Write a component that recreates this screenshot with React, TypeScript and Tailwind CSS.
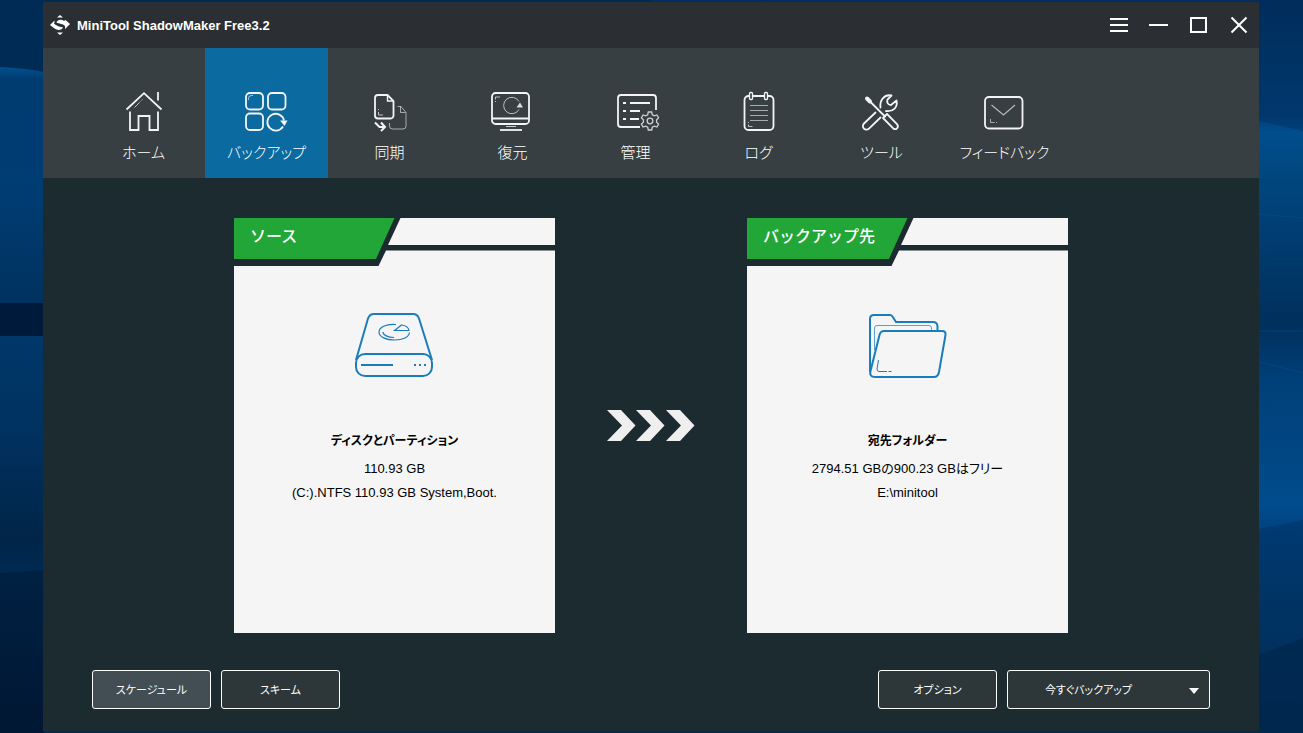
import React, { useState } from 'react';

const iconProps = {
  width: 45,
  height: 44,
  viewBox: '0 0 45 44',
  fill: 'none',
  stroke: '#f2f4f5',
  strokeWidth: 1.8,
  className: 'overflow-visible',
  'aria-hidden': true
};

function HomeIcon() {
  return (
    <svg {...iconProps}>
      <path d="M5.5 19.5 23 3.2 40.5 19.5" />
      <path d="M37 2v8.5" />
      <path d="M9 21.5V40h8.5V26h11v14H37V21.5" />
      <path d="m13.5 17.5 5-5M19.5 11.5l1-1M21.5 9.5l.6-.6" strokeWidth="1" opacity=".7" />
    </svg>
  );
}

function BackupIcon() {
  return (
    <svg {...iconProps}>
      <rect x="2" y="3" width="17" height="16.5" rx="4" />
      <rect x="24" y="3" width="17.5" height="16.5" rx="4" />
      <rect x="2" y="23.5" width="17" height="16.5" rx="4" />
      <path d="M39 36.5a8.4 8.4 0 1 1 1-6" />
      <path d="M36 30.5h7.5L40.5 36z" fill="#f2f4f5" stroke="none" />
      <path d="M4.5 10V8.5a3 3 0 0 1 3-3H9" strokeWidth="1" opacity=".7" />
    </svg>
  );
}

function SyncIcon() {
  return (
    <svg {...iconProps}>
      <path d="M20.5 5H11a3 3 0 0 0-3 3v17.5a3 3 0 0 0 3 3h12.5a3 3 0 0 0 3-3V11z" />
      <path d="M20.5 5v6h6" strokeWidth="1.4" />
      <path
        d="M30.5 16.5h3.500l5 6V36a3 3 0 0 1-3 3H25.500a3 3 0 0 1-3-3v-3M33.5 16.5v6h5"
        strokeWidth="1"
        opacity=".6"
      />
      <path d="M11.500 19v1M11.500 22v3h4.500" strokeWidth="1" opacity=".7" />
      <path d="m8 32.500 4.500 4.500h5M14 32.500l4 4.500-4 4" strokeWidth="2" />
    </svg>
  );
}

function RestoreIcon() {
  return (
    <svg {...iconProps}>
      <rect x="2" y="3" width="37" height="31" rx="3.5" />
      <path d="M2 28.5h37" />
      <path d="M16 36.5h10" strokeWidth="1" opacity=".8" />
      <path d="M10 40h22" />
      <path d="M29 19.5a8.2 8.2 0 1 1 0-8" strokeWidth="1" opacity=".7" />
      <path d="M26.5 17.5h6.5L30 12.500z" fill="#d7dadb" stroke="none" />
      <path d="M5.5 12v-1M5.5 9.500V7H10" strokeWidth="1" opacity=".7" />
    </svg>
  );
}

function ManageIcon() {
  return (
    <svg {...iconProps}>
      <path d="M43 20V8a3 3 0 0 0-3-3H8a3 3 0 0 0-3 3v26a3 3 0 0 0 3 3h19" />
      <path d="M10 13h3M10 21h3M10 29h3M17 13h20M17 21h10M17 29h9" strokeWidth="2" />
      <path
        d="M35.3 22h3.4l.6 2.700 2 1.100 2.600-.8 1.700 3-2 1.900v2.200l2 1.900-1.700 3-2.600-.8-2 1.100-.6 2.700h-3.400l-.6-2.700-2-1.100-2.600.8-1.700-3 2-1.900v-2.200l-2-1.900 1.700-3 2.600.8 2-1.100z"
        strokeWidth="1.3"
        opacity=".8"
      />
      <circle cx="37" cy="31" r="2.8" strokeWidth="1.3" opacity=".8" />
    </svg>
  );
}

function LogIcon() {
  return (
    <svg {...iconProps}>
      <path d="M13 6h-.5a4 4 0 0 0-4 4v26a4 4 0 0 0 4 4h21a4 4 0 0 0 4-4V10a4 4 0 0 0-4-4H32M17 6h11" />
      <rect x="13.5" y="2.5" width="3" height="7" rx="1" strokeWidth="1.3" />
      <rect x="28.5" y="2.5" width="3" height="7" rx="1" strokeWidth="1.3" />
      <path d="M14 15.5h18M14 20.5h18M14 25.5h18M14 30.5h18" strokeWidth="1" opacity=".6" />
      <path d="M12.5 32v1M12.5 34.5v2h4" strokeWidth="1" opacity=".7" />
    </svg>
  );
}

function ToolsIcon() {
  return (
    <svg {...iconProps} strokeLinejoin="round" strokeLinecap="round">
      <path d="M21.5 17.5C20.5 10.5 25 4 32.500 5.500L28.500 9.500c-1 3 .5 5.500 3.500 5.500l5.500-4.500c1.500 6.500-3 11.500-10.500 10.500" />
      <path d="M16.5 22.5 5 33.5a3.500 3.500 0 0 0 5 5.200L21.500 27.500" />
      <path d="m8 8.500 3 3" strokeWidth="4" />
      <path d="M11 11.500 26 26.500" />
      <path d="m24 28 4-4 10 10.200c2.500 3-1 6.500-4 4z" />
    </svg>
  );
}

function FeedbackIcon() {
  return (
    <svg {...iconProps}>
      <rect x="3" y="7" width="37.5" height="31.5" rx="4" />
      <path d="m9.5 15 12 10 11.5-10" strokeWidth="1.3" opacity=".65" />
      <path d="M8.5 29v3.5h4M14 32.500h1" strokeWidth="1" opacity=".6" />
    </svg>
  );
}

const tabs = [
  { label: 'ホーム', icon: HomeIcon },
  { label: 'バックアップ', icon: BackupIcon },
  { label: '同期', icon: SyncIcon },
  { label: '復元', icon: RestoreIcon },
  { label: '管理', icon: ManageIcon },
  { label: 'ログ', icon: LogIcon },
  { label: 'ツール', icon: ToolsIcon },
  { label: 'フィードバック', icon: FeedbackIcon }
];

function Logo() {
  return (
    <svg width="20" height="20" viewBox="0 0 20 20" fill="#fff" aria-hidden="true">
      <path d="M10 0l3 2.500H7zM10 20l-3-2.500h6z" />
      <path d="M0 10l4.500-4.500v3c2 2 6 2.500 8.500 3.500-.5 2.500-3.500 3.500-6.500 2.500l-2-1z" />
      <path d="M20 9l-4.500-4-1.500 1c-2.500-2-6.500-1.500-7.500 1.500 2.500 1.500 6.500 1 8.500 3.500v3z" />
      <path d="M4.500 8c2.500 3 6 3 10.500 4.500" fill="none" stroke="#2b2f33" strokeWidth="1.200" />
    </svg>
  );
}

function Wallpaper() {
  return (
    <svg
      className="absolute inset-0 h-full w-full"
      viewBox="0 0 1303 733"
      preserveAspectRatio="none"
      aria-hidden="true"
    >
      <defs>
        <linearGradient id="left-top" x1="0" y1="0" x2="0" y2="1">
          <stop offset="0" stopColor="#00518f" />
          <stop offset=".05" stopColor="#003c70" />
          <stop offset=".5" stopColor="#003d73" />
          <stop offset="1" stopColor="#00325f" />
        </linearGradient>
        <linearGradient id="left-low" x1="0" y1="0" x2="0" y2="1">
          <stop offset="0" stopColor="#00386a" />
          <stop offset=".4" stopColor="#003260" />
          <stop offset=".85" stopColor="#002548" />
          <stop offset="1" stopColor="#002a52" />
        </linearGradient>
        <linearGradient id="left-end" x1="0" y1="0" x2="0" y2="1">
          <stop offset="0" stopColor="#002143" />
          <stop offset="1" stopColor="#001733" />
        </linearGradient>
        <linearGradient id="right" x1="0" y1="0" x2="0" y2="733" gradientUnits="userSpaceOnUse">
          <stop offset="0" stopColor="#002f5c" />
          <stop offset=".16" stopColor="#00407a" />
          <stop offset=".18" stopColor="#004e8d" />
          <stop offset=".23" stopColor="#004881" />
          <stop offset=".33" stopColor="#003c70" />
          <stop offset=".44" stopColor="#00305c" />
          <stop offset=".52" stopColor="#004079" />
          <stop offset=".69" stopColor="#004c8c" />
          <stop offset=".72" stopColor="#004483" />
          <stop offset=".86" stopColor="#003566" />
          <stop offset="1" stopColor="#002a52" />
        </linearGradient>
      </defs>
      <rect width="652" height="733" fill="#002b54" />
      <path d="M0 67q24 1 44 5v232H0z" fill="url(#left-top)" />
      <rect y="303" width="44" height="33" fill="#001a3b" />
      <path d="M0 336h44v234L0 573z" fill="url(#left-low)" />
      <path d="M0 573l44-3v163H0z" fill="url(#left-end)" />
      <rect x="652" width="651" height="733" fill="url(#right)" />
      <path d="M1259 121l44 10V0h-44z" fill="#002c58" opacity=".35" />
      <path d="M1259 529l44-9v213h-44z" fill="#002f5c" opacity=".45" />
      <path d="M1259 655l44-17v95h-44z" fill="#002145" opacity=".5" />
      <path d="M1259 214l44 4M1259 331h44M1259 362l44 11" stroke="#0a5595" opacity=".4" />
    </svg>
  );
}

function DiskIcon() {
  return (
    <svg width="81" height="66" viewBox="0 0 81 66" fill="none" stroke="#1a7dbb" strokeWidth="2" aria-hidden="true">
      <path d="M2 48 14 6.500Q15.500 2 20 2h39Q63.500 2 65 6.500L78 48" />
      <rect x="2" y="42" width="76" height="22" rx="9" />
      <path d="M7 53h32M60 53h2M65 53h2M70 53h2" />
      <path d="M42 12.500c-9-1-17 2.500-17 7.500s7 8 15.500 8 14.500-3 15-7.500" strokeWidth="1.200" />
      <path d="M40.500 18.500 47.500 13c4 .5 7 2.500 7.500 5.500zM29 20c0 3 5 5.500 11 5.500" strokeWidth="1.200" />
    </svg>
  );
}

function FolderIcon() {
  return (
    <svg width="81" height="66" viewBox="0 0 81 66" fill="none" stroke="#1a7dbb" strokeWidth="2" aria-hidden="true">
      <path d="M3 60V7q0-4 4-4h16q1.500 0 2.500 1.500L29 10h37q4 0 4.500 4v5" />
      <path d="M17 19h58q4 0 3.500 4L72 60q-1 5-5 5H8q-6 0-4.500-6L12.500 23Q13.500 19 17 19z" />
      <path d="M7.500 38V16q0-2.500 2.500-2.500h52q2.500 0 2.500 2.500v3" strokeWidth="1" opacity=".7" />
      <path d="M11.500 48 10 57q0 2.500 2 2.500h8M21.500 59.500h3" strokeWidth="1" />
    </svg>
  );
}

interface CardProps {
  heading: string;
  icon: React.ReactNode;
  title: string;
  lines: string[];
}

function Card({ heading, icon, title, lines }: CardProps) {
  return (
    <section className="flex w-[321px] flex-col bg-[#f5f5f5] text-center text-black">
      <div className="relative h-12 w-full">
        <svg
          className="absolute inset-0 h-full w-full"
          viewBox="0 0 321 48"
          preserveAspectRatio="none"
          aria-hidden="true"
        >
          <rect width="321" height="48" fill="#1c2b30" />
          <path d="M0 0h160.500L142 41H0z" fill="#21a637" />
          <path d="M166.500 0H321v27H154z" fill="#f5f5f5" />
          <path d="M152 32.500h169V48H144.500z" fill="#f5f5f5" />
        </svg>
        <h2 className="relative pl-4 text-left text-base leading-[38px] font-medium text-white">{heading}</h2>
      </div>
      <div className="mt-[46px] flex justify-center">{icon}</div>
      <h3 className="mt-[51px] mb-1 text-[12px] leading-6 font-bold [font-feature-settings:'palt']">{title}</h3>
      {lines.map(line => (
        <p key={line} className="text-[13px] leading-6 [font-feature-settings:'palt']">
          {line}
        </p>
      ))}
    </section>
  );
}

const footerButton =
  "h-[39px] rounded-[3px] border border-white pt-0.5 text-[11px] [font-feature-settings:'palt']";

export default function App() {
  const [active, setActive] = useState('バックアップ');

  return (
    <div className="relative flex min-h-screen flex-col bg-[#002b54] py-0.5 pr-11 pl-[43px] font-['Liberation_Sans','Noto_Sans_CJK_JP',sans-serif] text-white">
      <Wallpaper />
      <div className="relative flex flex-1 flex-col bg-[#1c2b30]">
        <header className="flex h-[46px] items-center bg-[#2b2f33] pl-[7px]">
          <Logo />
          <h1 className="ml-[7px] flex-1 pt-0.5 text-[13px] font-bold">MiniTool ShadowMaker Free3.2</h1>
          <button aria-label="メニュー" className="flex h-10 w-10 items-center justify-center">
            <svg width="20" height="20" viewBox="0 0 20 20" stroke="#fff" strokeWidth="2">
              <path d="M1 4h18M1 10h18M1 16h18" />
            </svg>
          </button>
          <button aria-label="最小化" className="flex h-10 w-10 items-center justify-center">
            <svg width="20" height="20" viewBox="0 0 20 20" stroke="#fff" strokeWidth="2">
              <path d="M0 10h19" />
            </svg>
          </button>
          <button aria-label="最大化" className="flex h-10 w-10 items-center justify-center">
            <svg width="20" height="20" viewBox="0 0 20 20" fill="none" stroke="#fff" strokeWidth="2">
              <path d="M2 3h15v14H2z" />
            </svg>
          </button>
          <button aria-label="閉じる" className="flex h-10 w-10 items-center justify-center">
            <svg width="20" height="20" viewBox="0 0 20 20" stroke="#fff" strokeWidth="2">
              <path d="m2.500 2.500 15 15M17.500 2.500l-15 15" />
            </svg>
          </button>
        </header>

        <nav className="flex h-[130px] bg-[#383f42] pl-[39px]">
          {tabs.map(({ label, icon: Icon }) => (
            <button
              key={label}
              onClick={() => setActive(label)}
              className={`flex w-[123px] flex-col items-center pt-[42px] ${active === label ? 'bg-[#0b6a9f]' : ''}`}
            >
              <Icon />
              <span className="mt-2 text-[15px] leading-[22px] font-light whitespace-nowrap [font-feature-settings:'palt']">
                {label}
              </span>
            </button>
          ))}
        </nav>

        <main className="flex flex-1 justify-center gap-[52px] pt-10">
          <Card
            heading="ソース"
            icon={<DiskIcon />}
            title="ディスクとパーティション"
            lines={['110.93 GB', '(C:).NTFS 110.93 GB System,Boot.']}
          />
          <div className="flex items-center">
            <svg width="88" height="32" viewBox="0 0 88 32" fill="#efefef" aria-hidden="true">
              <path d="M0 0h14l14.500 15.500L14 31H0l15-15.500z" />
              <path d="M29 0h14l14.500 15.500L43 31H29l15-15.500z" />
              <path d="M59 0h14l14.500 15.500L73 31H59l15-15.500z" />
            </svg>
          </div>
          <Card
            heading="バックアップ先"
            icon={<FolderIcon />}
            title="宛先フォルダー"
            lines={['2794.51 GBの900.23 GBはフリー', 'E:\\minitool']}
          />
        </main>

        <footer className="flex gap-2.5 px-[49px] pt-[37px] pb-[22px]">
          <button className={`${footerButton} w-[119px] bg-[#424e53]`}>スケージュール</button>
          <button className={`${footerButton} w-[119px] bg-[#2d3739]`}>スキーム</button>
          <button className={`${footerButton} ml-auto w-[119px] bg-[#2d3739]`}>オプション</button>
          <button
            className={`${footerButton} flex w-[203px] items-center bg-[#2d3739] pr-2.5 pl-0`}
            aria-haspopup="menu"
          >
            <span className="flex-1 pr-5">今すぐバックアップ</span>
            <svg width="10" height="6" viewBox="0 0 10 6" fill="#fff" aria-hidden="true">
              <path d="M0 0h10L5 6z" />
            </svg>
          </button>
        </footer>
      </div>
    </div>
  );
}
